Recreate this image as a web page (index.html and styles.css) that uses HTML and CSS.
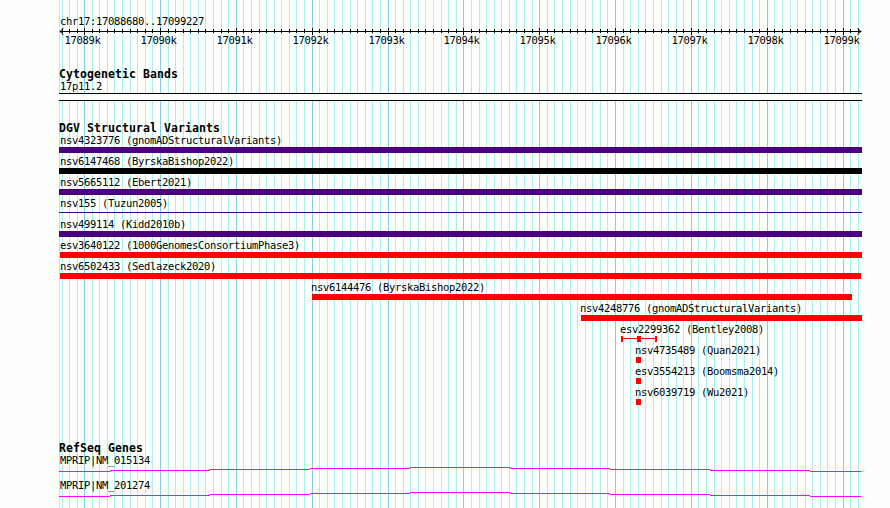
FILE: index.html
```
<!DOCTYPE html>
<html>

<head>
    <meta charset="utf-8">
    <title>chr17:17088680..17099227</title>
    <link rel="stylesheet" href="styles.css">
</head>

<body>
    <div class="panel">
        <svg class="grid" id="grid" width="803" height="508" shape-rendering="crispEdges"></svg>

        <div class="ruler">
            <div class="label">chr17:17088680..17099227</div>
            <svg id="ruler" width="803" height="22"></svg>
        </div>

        <div class="track cyto">
            <h2>Cytogenetic Bands</h2>
            <div class="label">17p11.2</div>
            <div class="band"></div>
        </div>

        <div class="track variants">
            <h2>DGV Structural Variants</h2>
            <div id="variants"></div>
        </div>

        <div class="track genes">
            <h2>RefSeq Genes</h2>
            <div class="gene">
                <div class="label">MPRIP|NM_015134</div>
                <svg width="803" height="5" shape-rendering="crispEdges">
                    <path d="M0 4.5H51M51 3.5H151M151 2.5H251M251 1.5H351M351 .5H451M451 1.5H551M551 2.5H651M651 3.5H751M751 4.5H802" />
                </svg>
            </div>
            <div class="gene">
                <div class="label">MPRIP|NM_201274</div>
                <svg width="803" height="5" shape-rendering="crispEdges">
                    <path d="M0 4.5H51M51 3.5H151M151 2.5H251M251 1.5H351M351 .5H451M451 1.5H551M551 2.5H651M651 3.5H751M751 4.5H802" />
                </svg>
            </div>
        </div>
    </div>
    <script>
        // start and end are pixels inside the panel
        const variants = [
            { name: 'nsv4323776 (gnomADStructuralVariants)', type: 'complex', start: 0, end: 803 },
            { name: 'nsv6147468 (ByrskaBishop2022)', type: 'other', start: 0, end: 803 },
            { name: 'nsv5665112 (Ebert2021)', type: 'complex', start: 0, end: 803 },
            { name: 'nsv155 (Tuzun2005)', type: 'complex thin', start: 0, end: 803 },
            { name: 'nsv499114 (Kidd2010b)', type: 'complex', start: 0, end: 803 },
            { name: 'esv3640122 (1000GenomesConsortiumPhase3)', type: 'loss', start: 1, end: 803 },
            { name: 'nsv6502433 (Sedlazeck2020)', type: 'loss', start: 1, end: 802 },
            { name: 'nsv6144476 (ByrskaBishop2022)', type: 'loss', start: 253, end: 793 },
            { name: 'nsv4248776 (gnomADStructuralVariants)', type: 'loss', start: 522, end: 803 },
            { name: 'esv2299362 (Bentley2008)', type: 'range', start: 562, end: 598 },
            { name: 'nsv4735489 (Quan2021)', type: 'loss', start: 577, end: 582 },
            { name: 'esv3554213 (Boomsma2014)', type: 'loss', start: 577, end: 582 },
            { name: 'nsv6039719 (Wu2021)', type: 'loss', start: 577, end: 582 }
        ];

        const step = 7.585;
        const firstMajor = 25.1;
        let grid = '<rect class="minor" x="0" width="1" height="508"/>';
        let ruler = '<path d="M1 5.5H802M4.5 2L1 5.5L4.5 9M798.5 2L802 5.5L798.5 9"/>';

        for (let i = -3; i <= 102; i++) {
            const x = i === -3 ? 3 : Math.round(firstMajor + i * step);
            const major = i % 10 === 0;
            grid += `<rect class="${major ? 'major' : 'minor'}" x="${x}" width="1" height="508"/>`;
            ruler += major
                ? `<path d="M${x + 0.5} 2V9"/><text x="${x - 19.5}" y="18">${17089 + i / 10}k</text>`
                : `<path d="M${x + 0.5} 3V7"/>`;
        }
        document.getElementById('grid').innerHTML = grid;
        document.getElementById('ruler').innerHTML = ruler;

        let rows = '';
        variants.forEach(function (v) {
            const left = Math.max(0, v.start - 2);
            rows += `<div class="variant">
                <div class="label" style="margin-left: ${left}px">${v.name}</div>
                <div class="bar ${v.type}" style="margin-left: ${v.start}px; width: ${v.end - v.start}px"></div>
            </div>`;
        });
        document.getElementById('variants').innerHTML = rows;
    </script>
</body>

</html>
```
FILE: styles.css
```
* {
    margin: 0;
    padding: 0;
    box-sizing: border-box;
}

body {
    background: #fdfffc;
    color: #000;
    height: 508px;
    overflow: hidden;
}

svg {
    display: block;
}

.panel {
    position: relative;
    width: 803px;
    height: 508px;
    margin-left: 59px;
    padding-top: 15px;
    overflow: hidden;
}

.grid {
    position: absolute;
    top: 0;
    left: 0;
    z-index: -1;
}

.minor {
    fill: #afeeee;
}

.major {
    fill: #87ceeb;
}

.label,
#ruler text {
    font-family: "DejaVu Sans Mono", monospace;
    font-size: 10.5px;
    letter-spacing: -0.32px;
}

.label {
    height: 12px;
    line-height: 12px;
    padding-left: 1px;
    white-space: nowrap;
}

.track .label {
    line-height: 10px;
}

h2 {
    height: 13px;
    font-family: "DejaVu Sans Mono", monospace;
    font-size: 11.5px;
    font-weight: bold;
    line-height: 13px;
    letter-spacing: 0.08px;
    white-space: nowrap;
}

/* ruler */
.ruler {
    height: 53px;
}

#ruler {
    margin-top: -1px;
}

#ruler path {
    fill: none;
    stroke: #000;
}

/* cytogenetic bands */
.cyto {
    height: 54px;
}

.band {
    height: 8px;
    background: #fdfffc;
    border-top: 1px solid #000;
    border-bottom: 1px solid #000;
}

/* variants */
.variants {
    height: 320px;
}

.variant {
    height: 21px;
}

.bar {
    height: 6px;
}

.complex {
    background: #4b0082;
}

.other {
    background: #000;
}

.loss {
    background: #f00;
}

.thin {
    height: 1px;
    position: relative;
    top: 2px;
}

.range {
    background:
        linear-gradient(#f00, #f00) 16px 0 / 4px 6px no-repeat,
        linear-gradient(#f00, #f00) 0 2px / 100% 1px no-repeat;
    border-left: 2px solid #f00;
    border-right: 2px solid #f00;
    background-origin: border-box;
}

/* genes */
.gene {
    height: 25px;
}

.gene path {
    fill: none;
    stroke: #f0f;
}
```
